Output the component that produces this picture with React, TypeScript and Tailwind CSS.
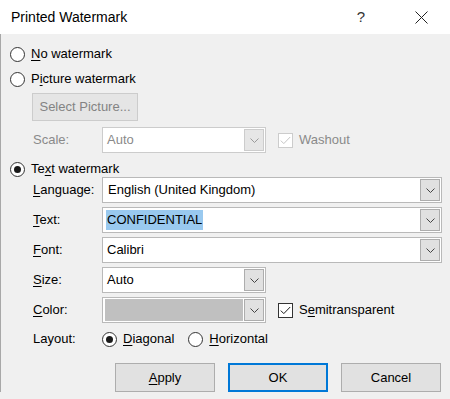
import React from "react";

// Small chevron used on every dropdown button
const Chevron = ({ color = "#444" }: { color?: string }) => (
  <svg width="9" height="5" viewBox="0 0 9 5" fill="none">
    <path d="M0.5 0.5 L4.5 4.5 L8.5 0.5" stroke={color} strokeWidth="1" />
  </svg>
);

const Radio = ({ checked = false }: { checked?: boolean }) => (
  <span className="flex h-[15px] w-[15px] shrink-0 items-center justify-center rounded-full border border-[#333333] bg-white">
    {checked && <span className="h-[7px] w-[7px] rounded-full bg-[#1a1a1a]" />}
  </span>
);

const Check = ({ disabled = false }: { disabled?: boolean }) => (
  <span
    className={
      "flex h-[15px] w-[15px] shrink-0 items-center justify-center border bg-white " +
      (disabled ? "border-[#cccccc]" : "border-[#333333]")
    }
  >
    <svg width="11" height="9" viewBox="0 0 11 9" fill="none">
      <path
        d="M0.8 4.6 L3.8 7.6 L10.2 1.0"
        stroke={disabled ? "#c4c4c4" : "#1a1a1a"}
        strokeWidth="1"
      />
    </svg>
  </span>
);

// Label with one underlined mnemonic letter
const Mn = ({ pre, key1, post }: { pre?: string; key1: string; post: string }) => (
  <span>
    {pre}
    <span className="underline underline-offset-2">{key1}</span>
    {post}
  </span>
);

interface ComboProps {
  children?: React.ReactNode;
  width: string;
  disabled?: boolean;
}

const Combo = ({ children, width, disabled }: ComboProps) => (
  <div
    className={
      "flex h-[26px] items-stretch border bg-white p-[1px] " +
      width +
      (disabled ? " border-[#cccccc]" : " border-[#b9b9b9]")
    }
  >
    <div className="flex flex-1 items-center overflow-hidden">{children}</div>
    <div
      className={
        "flex w-[20px] items-center justify-center border " +
        (disabled ? "border-[#cccccc] bg-[#e6e6e6]" : "border-[#adadad] bg-[#e1e1e1]")
      }
    >
      <Chevron color={disabled ? "#9a9a9a" : "#444"} />
    </div>
  </div>
);

const Row = ({ label, children }: { label: React.ReactNode; children: React.ReactNode }) => (
  <div className="flex items-center pl-[32px]">
    <div className="w-[69px]">{label}</div>
    {children}
  </div>
);

const App: React.FC = () => {
  return (
    <div
      className="relative h-[399px] w-[450px] overflow-hidden bg-[#f0f0f0] text-[13px] text-black"
      style={{ fontFamily: '"Liberation Sans", Arial, sans-serif' }}
    >
      <div className="flex h-[34px] items-center bg-white pl-[11px]">
        <span className="text-[14px]">Printed Watermark</span>
        <span className="ml-auto mr-[50px] text-[15px] text-[#333]">?</span>
        <svg width="13" height="13" viewBox="0 0 13 13" className="mr-[22px]">
          <path d="M0.5 0.5 L12.5 12.5 M12.5 0.5 L0.5 12.5" stroke="#222" strokeWidth="1" />
        </svg>
      </div>

      <div className="flex flex-col border-l border-[#a8a8a8]">
        <div className="mt-[11px] flex h-[18px] items-center gap-[6px] pl-[9px]">
          <Radio />
          <Mn key1="N" post="o watermark" />
        </div>
        <div className="mt-[7px] flex h-[18px] items-center gap-[6px] pl-[9px]">
          <Radio />
          <Mn pre="P" key1="i" post="cture watermark" />
        </div>

        <div className="ml-[31px] mt-[5px] flex h-[28px] w-[106px] items-center justify-center border border-[#cccccc] bg-[#e5e5e5] text-[#838383]">
          Select Picture...
        </div>

        <div className="mt-[6px] flex items-center pl-[32px] text-[#8a8a8a]">
          <div className="w-[69px]">Scale:</div>
          <Combo width="w-[164px]" disabled>
            <span className="pl-[3px]">Auto</span>
          </Combo>
          <div className="ml-[12px] flex items-center gap-[6px]">
            <Check disabled />
            <span>Washout</span>
          </div>
        </div>

        <div className="mt-[7px] flex h-[18px] items-center gap-[6px] pl-[9px]">
          <Radio checked />
          <Mn pre="Te" key1="x" post="t watermark" />
        </div>

        <div className="-mt-[1px] flex flex-col gap-[4px]">
          <Row label={<Mn key1="L" post="anguage:" />}>
            <Combo width="w-[340px]">
              <span className="pl-[4px]">English (United Kingdom)</span>
            </Combo>
          </Row>
          <Row label={<Mn key1="T" post="ext:" />}>
            <Combo width="w-[340px]">
              <span className="ml-[2px] bg-[#99c9ef] px-[1px] leading-[20px]">CONFIDENTIAL</span>
            </Combo>
          </Row>
          <Row label={<Mn key1="F" post="ont:" />}>
            <Combo width="w-[340px]">
              <span className="pl-[3px]">Calibri</span>
            </Combo>
          </Row>
          <Row label={<Mn key1="S" post="ize:" />}>
            <Combo width="w-[164px]">
              <span className="pl-[3px]">Auto</span>
            </Combo>
          </Row>
          <Row label={<Mn key1="C" post="olor:" />}>
            <Combo width="w-[164px]">
              <div className="mx-[1px] h-full flex-1 bg-[#c0c0c0]" />
            </Combo>
            <div className="ml-[12px] flex items-center gap-[6px]">
              <Check />
              <Mn pre="S" key1="e" post="mitransparent" />
            </div>
          </Row>
        </div>

        <div className="mt-[6px] flex h-[20px] items-center pl-[32px]">
          <div className="w-[69px]">Layout:</div>
          <div className="flex items-center gap-[6px]">
            <Radio checked />
            <Mn key1="D" post="iagonal" />
          </div>
          <div className="ml-[14px] flex items-center gap-[6px]">
            <Radio />
            <Mn key1="H" post="orizontal" />
          </div>
        </div>

        <div className="mt-[14px] flex gap-[13px] pl-[114px]">
          <div className="flex h-[29px] w-[100px] items-center justify-center border border-[#adadad] bg-[#e1e1e1]">
            <Mn key1="A" post="pply" />
          </div>
          <div className="flex h-[29px] w-[100px] items-center justify-center border-2 border-[#0078d7] bg-[#e1e1e1]">
            OK
          </div>
          <div className="flex h-[29px] w-[100px] items-center justify-center border border-[#adadad] bg-[#e1e1e1]">
            Cancel
          </div>
        </div>
      </div>
    </div>
  );
};

export default App;
